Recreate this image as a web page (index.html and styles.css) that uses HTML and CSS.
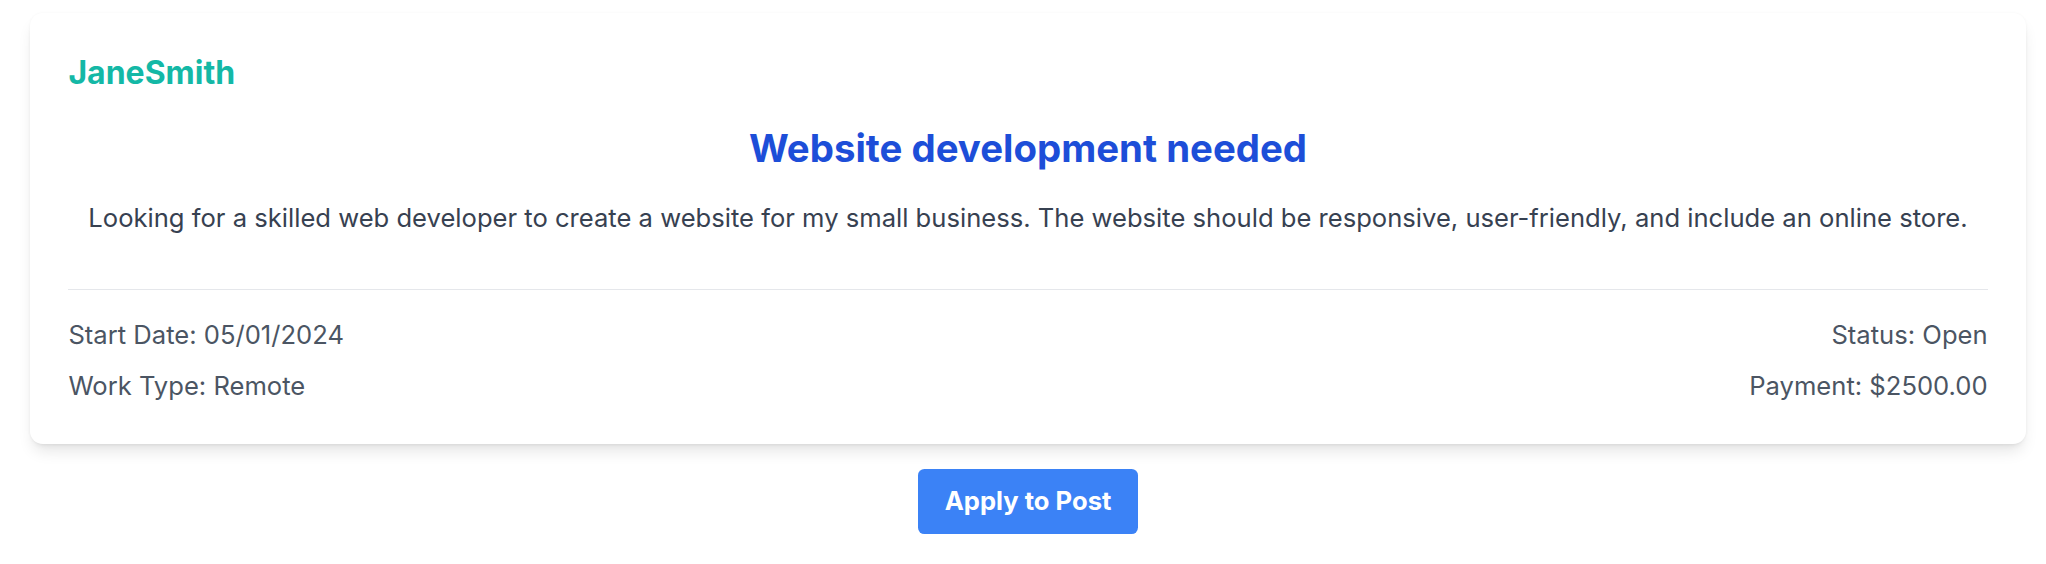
FILE: index.html
```html
<!DOCTYPE html>
<html lang="en">
<head>
<meta charset="utf-8">
<title>Post</title>
<link rel="stylesheet" href="styles.css">
</head>
<body>
<main class="page">
  <article class="card">
    <div class="author">JaneSmith</div>
    <h1 class="title">Website development needed</h1>
    <p class="desc">Looking for a skilled web developer to create a website for my small business. The website should be responsive, user-friendly, and include an online store.</p>
    <div class="meta">
      <div class="meta-col">
        <p class="meta-item">Start Date: 05/01/2024</p>
        <p class="meta-item">Work Type: Remote</p>
      </div>
      <div class="meta-col right">
        <p class="meta-item">Status: Open</p>
        <p class="meta-item">Payment: $2500.00</p>
      </div>
    </div>
  </article>
  <div class="actions">
    <button class="apply">Apply to Post</button>
  </div>
</main>
</body>
</html>
```
FILE: styles.css
```css
* { box-sizing: border-box; }
html, body { margin: 0; padding: 0; background: #ffffff; }
body { font-family: Inter, "Noto Sans", "Liberation Sans", sans-serif; }

.page {
  padding: 13px 20px 0 30px;
}

.card {
  background: #ffffff;
  border-radius: 12.8px;
  padding: 38.4px;
  box-shadow: 0 10px 15px -3px rgba(0,0,0,0.10), 0 4px 6px -4px rgba(0,0,0,0.10), 0 0 3px rgba(0,0,0,0.04);
}

.author {
  font-size: 32px;
  line-height: 44.8px;
  font-weight: 700;
  color: #14b8a6;
}

.title {
  margin: 27px 0 0 0;
  font-size: 38.4px;
  line-height: 51.2px;
  font-weight: 700;
  color: #1d4ed8;
  text-align: center;
}

.desc {
  margin: 25px 0 0 0;
  font-size: 25.6px;
  line-height: 38.4px;
  color: #374151;
  text-align: center;
}

.meta {
  margin-top: 51.2px;
  border-top: 1px solid #e5e7eb;
  padding-top: 25.6px;
  display: flex;
  justify-content: space-between;
}

.meta-col {
  display: flex;
  flex-direction: column;
  gap: 13px;
}

.meta-col.right { align-items: flex-end; }

.meta-item {
  margin: 0;
  font-size: 25.6px;
  line-height: 38.4px;
  color: #4b5563;
}

.actions {
  display: flex;
  justify-content: center;
  padding-top: 25.6px;
}

.apply {
  font-family: inherit;
  font-size: 25.6px;
  line-height: 38.4px;
  font-weight: 700;
  color: #ffffff;
  background: #3b82f6;
  border: none;
  border-radius: 6.4px;
  padding: 13px 27px;
}
```
